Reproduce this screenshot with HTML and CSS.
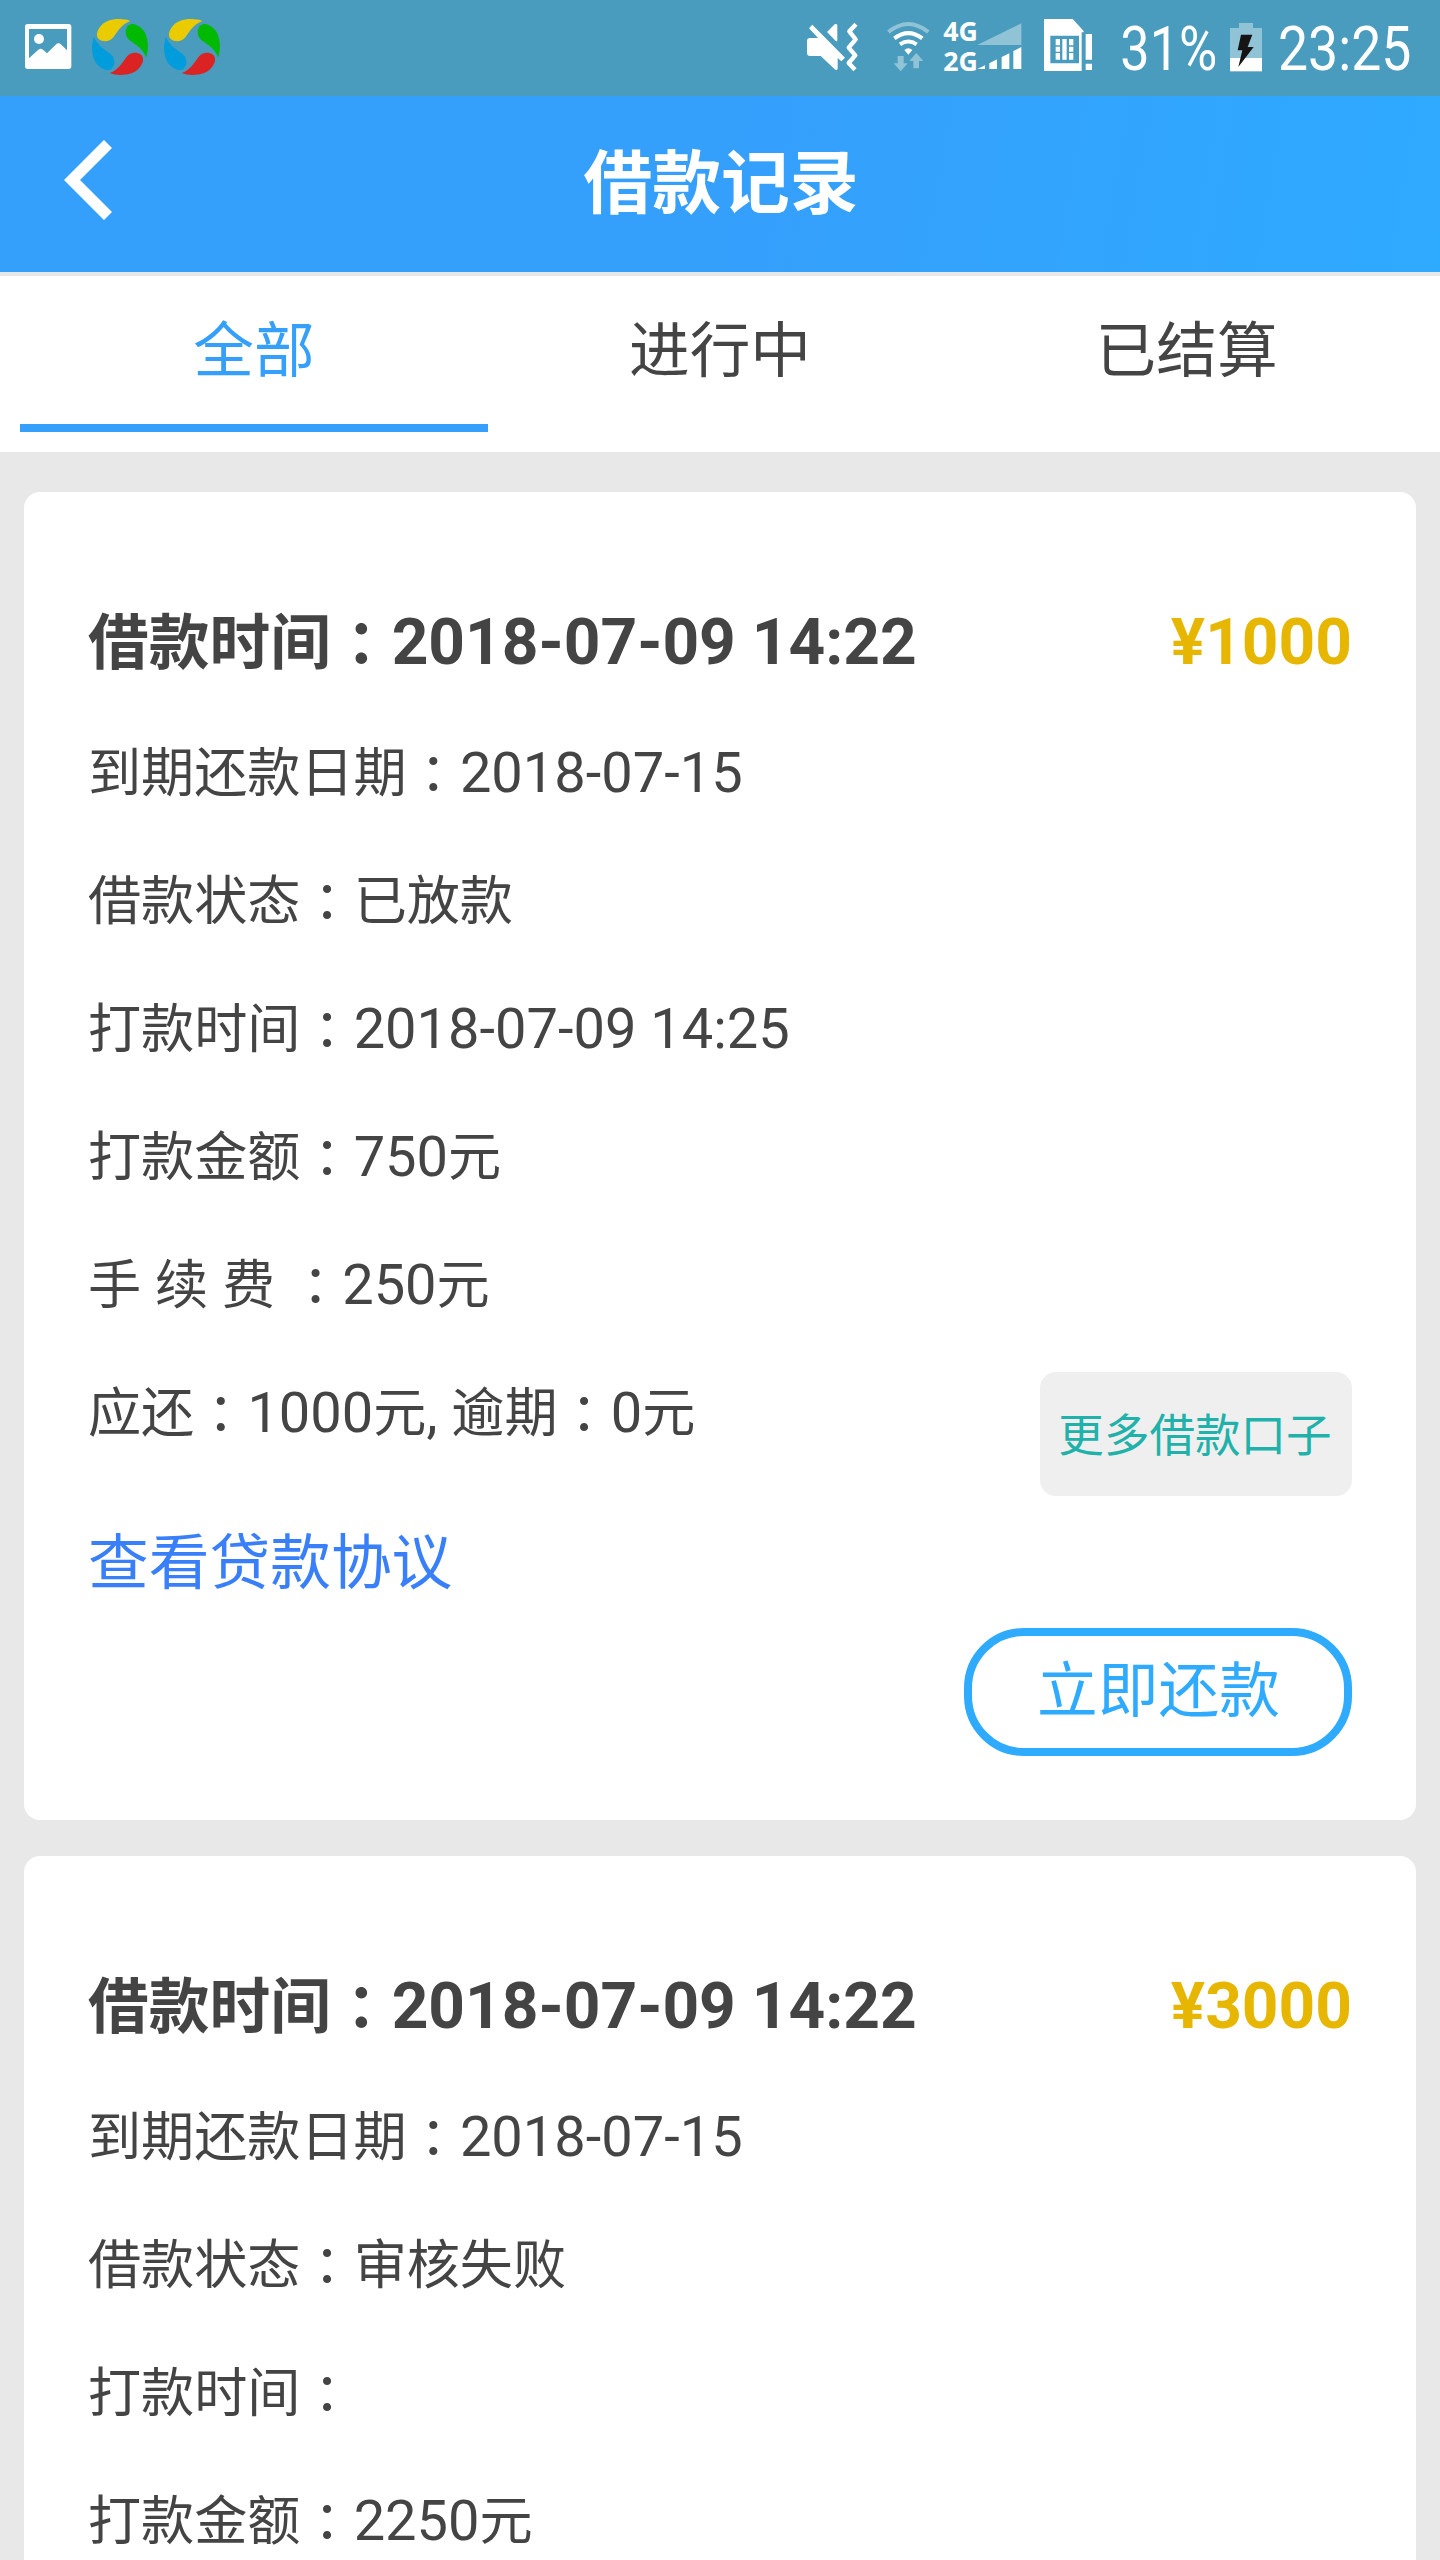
FILE: index.html
```html
<!DOCTYPE html>
<html lang="zh-CN">
<head>
<meta charset="utf-8">
<title>借款记录</title>
<link rel="stylesheet" href="styles.css">
</head>
<body>
<div class="status">
  <svg width="84" height="96" viewBox="0 0 252 288" fill="#fff">
    <path fill-rule="evenodd" d="M83 72H206Q214 72 214 80V199Q214 207 206 207H83Q75 207 75 199V80Q75 72 83 72ZM87 87V175L115 149Q122 143 129 149L141 160L167 134Q175 126 184 134L201 151V87Z"/>
    <circle cx="117" cy="117" r="15"/>
  </svg>
  <svg width="72" height="96" viewBox="252 0 216 288">
    <defs><path id="petal" d="M391 63C370 54 325 54 305 75C290 91 286 108 297 118C310 128 330 125 340 112C357 88 368 71 391 63Z"/></defs>
    <use href="#petal" fill="#eacb00"/>
    <use href="#petal" fill="#00b900" transform="rotate(90 360 141)"/>
    <use href="#petal" fill="#db2323" transform="rotate(180 360 141)"/>
    <use href="#petal" fill="#009cdb" transform="rotate(270 360 141)"/>
  </svg>
  <svg width="72" height="96" viewBox="252 0 216 288">
    <use href="#petal" fill="#eacb00"/>
    <use href="#petal" fill="#00b900" transform="rotate(90 360 141)"/>
    <use href="#petal" fill="#db2323" transform="rotate(180 360 141)"/>
    <use href="#petal" fill="#009cdb" transform="rotate(270 360 141)"/>
  </svg>
  <div class="status-right">
    <svg width="100" height="96" viewBox="0 0 300 288" fill="#fff">
      <path d="M97 74L195 173L184 184L173 174V205Q173 212 166 209L122 168H90Q81 168 81 159V123Q81 114 90 114H114L87 85Z"/>
      <path d="M141 96L164 73Q172 69 172 77V122Q170 126 165 121Z"/>
      <path d="M228 73L208 94L227 118L206 143L226 166L206 189L225 209" fill="none" stroke="#fff" stroke-width="13" stroke-linejoin="round"/>
    </svg>
    <svg width="60" height="96" viewBox="300 0 180 288" fill="#fff">
      <g fill="none" stroke="#fff" stroke-width="12">
        <path d="M325 96Q385 48 445 96" stroke-opacity=".4"/>
        <path d="M343 115Q385 84 427 115"/>
        <path d="M360 133Q385 116 410 133"/>
      </g>
      <path d="M373 150Q385 139 397 150L385 164Z"/>
      <path d="M353 168H371V190H383L362 214L341 190H353ZM400 205V183H388L409 159L430 183H417V205Z" fill-opacity=".4"/>
    </svg>
    <svg width="90" height="96" viewBox="480 0 270 288" fill="#fff">
      <text class="net" x="490" y="122" textLength="104" lengthAdjust="spacingAndGlyphs">4G</text>
      <text class="net" x="490" y="214" textLength="104" lengthAdjust="spacingAndGlyphs">2G</text>
      <path d="M592 135L724 70V135Z" fill-opacity=".4"/>
      <path d="M592 207L615 196V207ZM628 190L651 178V207H628ZM665 171L688 160V207H665ZM700 153L724 141V207H700Z"/>
    </svg>
    <svg width="70" height="96" viewBox="750 0 210 288" fill="#fff">
      <path fill-rule="evenodd" d="M792 57H878L911 93V97H905V213H792ZM811 107V190H897V107Z"/>
      <path d="M827 117H840V136H827ZM827 140H840V155H827ZM827 159H840V179H827ZM847 117H860V179H847ZM867 117H880V136H867ZM867 140H880V155H867ZM867 159H880V179H867ZM917 102H936V179H917ZM917 191H936V210H917Z"/>
    </svg>
    <svg width="120" height="96" viewBox="0 0 360 288" fill="#fff">
      <text class="clock" x="61" y="210" textLength="291" lengthAdjust="spacingAndGlyphs">31%</text>
    </svg>
    <svg width="50" height="96" viewBox="360 0 150 288">
      <path d="M417 69H459V84H486V174H390V84H417Z" fill="#fff" fill-opacity=".4"/>
      <path d="M390 174H486V214H390Z" fill="#fff"/>
      <path d="M423 104H457L443 141H461L415 201L427 151H413Z" fill="#151515"/>
    </svg>
    <svg width="170" height="96" viewBox="510 0 510 288" fill="#fff">
      <text class="clock" x="534" y="210" textLength="400" lengthAdjust="spacingAndGlyphs">23:25</text>
    </svg>
  </div>
</div>

<header class="header">
  <svg class="back" width="48" height="80" viewBox="0 0 48 80"><path d="M44 4L8 40L44 76" fill="none" stroke="#fff" stroke-width="11.4"/></svg>
  <h1 class="header-title">借款记录</h1>
</header>

<nav class="tabs">
  <div class="tab active">全部</div>
  <div class="tab">进行中</div>
  <div class="tab">已结算</div>
</nav>

<main class="list">
  <section class="card">
    <div class="card-head"><div><span class="zh">借款时间<i lang="zh-TW">：</i></span>2018-07-09 14:22</div><div class="amount">¥1000</div></div>
    <div class="row"><span class="zh">到期还款日期<i lang="zh-TW">：</i></span>2018-07-15</div>
    <div class="row"><span class="zh">借款状态<i lang="zh-TW">：</i>已放款</span></div>
    <div class="row"><span class="zh">打款时间<i lang="zh-TW">：</i></span>2018-07-09 14:25</div>
    <div class="row"><span class="zh">打款金额<i lang="zh-TW">：</i></span>750<span class="zh">元</span></div>
    <div class="row"><span class="zh">手</span> <span class="zh">续</span> <span class="zh">费</span> <span class="zh"><i lang="zh-TW">：</i></span>250<span class="zh">元</span></div>
    <div class="due">
      <div class="row"><span class="zh">应还<i lang="zh-TW">：</i></span>1000<span class="zh">元</span>, <span class="zh">逾期<i lang="zh-TW">：</i></span>0<span class="zh">元</span></div>
      <div class="more"><span class="zh">更多借款口子</span></div>
    </div>
    <div class="agreement"><span class="zh">查看贷款协议</span></div>
    <div class="repay"><span class="zh">立即还款</span></div>
  </section>
  <section class="card">
    <div class="card-head"><div><span class="zh">借款时间<i lang="zh-TW">：</i></span>2018-07-09 14:22</div><div class="amount">¥3000</div></div>
    <div class="row"><span class="zh">到期还款日期<i lang="zh-TW">：</i></span>2018-07-15</div>
    <div class="row"><span class="zh">借款状态<i lang="zh-TW">：</i>审核失败</span></div>
    <div class="row"><span class="zh">打款时间<i lang="zh-TW">：</i></span></div>
    <div class="row"><span class="zh">打款金额<i lang="zh-TW">：</i></span>2250<span class="zh">元</span></div>
  </section>
</main>
</body>
</html>
```

FILE: styles.css
```css
* { box-sizing: border-box; }

body {
  margin: 0;
  width: 1440px;
  height: 2560px;
  overflow: hidden;
  display: flex;
  flex-direction: column;
  background: #e8e8e8;
  color: #444;
  font-family: Roboto, "Noto Sans CJK SC", sans-serif;
  font-size: 56px;
}

/* Chinese glyphs are set slightly smaller than the Latin digits beside them */
.zh {
  font-family: "Noto Sans CJK SC", sans-serif;
  font-size: 0.949em;
  line-height: 0;
}

/* full-width colon centred in its em box */
.zh i {
  font-family: "Noto Sans CJK TC", sans-serif;
  font-style: normal;
  vertical-align: -0.03em;
}

.status {
  flex: none;
  display: flex;
  height: 96px;
  background: #499cbd;
}

.status svg { display: block; flex: none; overflow: visible; }
.status-right { display: flex; margin-left: auto; }
.net { font: bold 79px "Open Sans", sans-serif; }
.clock { font: 400 182px Roboto, sans-serif; }

.header {
  flex: none;
  height: 176px;
  display: grid;
  grid-template-columns: 112px 1fr 110px;
  align-items: center;
  background: linear-gradient(100deg, #359ffc 50%, #2eaaff);
}

.back { justify-self: end; margin-bottom: 8px; }

.header-title {
  margin: 0 0 12px;
  color: #fff;
  font: bold 68.8px/100px "Noto Sans CJK SC", sans-serif;
  text-align: center;
}

.tabs {
  flex: none;
  height: 176px;
  margin-top: 4px;
  padding: 0 20px 20px;
  display: grid;
  grid-template-columns: repeat(3, 1fr);
  background: #fff;
}

.tab {
  height: 156px;
  border-bottom: 8px solid transparent;
  font: 60.7px/140px "Noto Sans CJK SC", sans-serif;
  text-align: center;
}

.tab.active { margin-right: -1.33px; color: #359ffc; border-color: #359ffc; }

.list {
  display: flex;
  flex-direction: column;
  gap: 36px;
  padding: 40px 24px 0;
}

.card {
  flex: none;
  padding: 84px 64px 64px;
  border-radius: 16px;
  background: #fff;
  display: flex;
  flex-direction: column;
}

.card-head {
  display: flex;
  justify-content: space-between;
  font-size: 64px;
  font-weight: bold;
  line-height: 133px;
}

.amount { color: #e6b600; }

.row { height: 128px; line-height: 128px; white-space: pre; }

.due { display: flex; justify-content: space-between; height: 147px; }

.more {
  align-self: flex-end;
  width: 312px;
  height: 124px;
  border-radius: 16px;
  background: #efefef;
  color: #20b2aa;
  font-size: 48px;
  line-height: 127px;
  text-align: center;
  text-indent: -2px;
}

.agreement { height: 132px; color: #387ff9; font-size: 64px; line-height: 134px; }

.repay {
  align-self: flex-end;
  width: 388px;
  height: 128px;
  border: 8px solid #2eaaff;
  border-radius: 60px;
  color: #2eaaff;
  font-size: 64px;
  line-height: 109px;
  text-align: center;
  text-indent: 1px;
}
```
